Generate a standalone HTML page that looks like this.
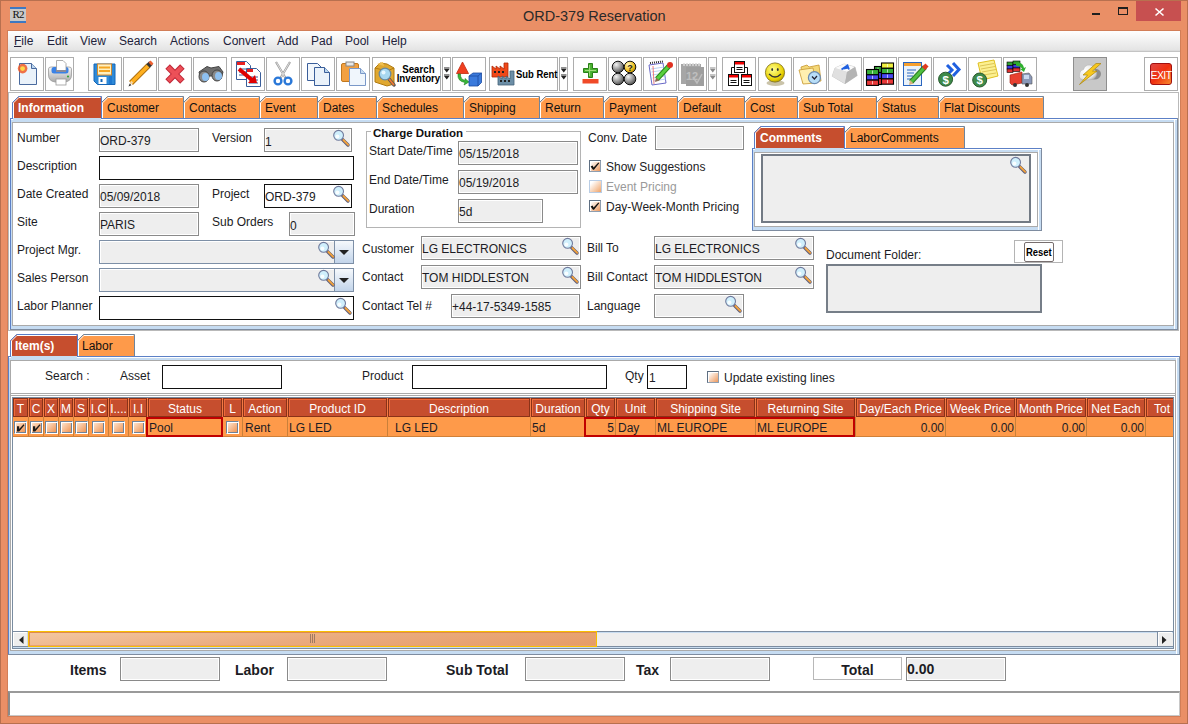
<!DOCTYPE html><html><head><meta charset='utf-8'><style>
*{margin:0;padding:0;box-sizing:border-box}
html,body{width:1188px;height:724px;overflow:hidden}
body{position:relative;background:#EA8F66;font-family:"Liberation Sans",sans-serif;font-size:12px;color:#1c1c24}
.a{position:absolute}
.t{white-space:nowrap}
.gf{background:#EEEEEE;border:1px solid #8A8A8A;box-shadow:inset 1px 1px 0 #fff}
.wf{background:#fff;border:1px solid #000}
.tb{background:#fff;border:1px solid #ADADAD}
svg{position:absolute;overflow:visible}
</style></head><body>
<div class="a" style="left:0px;top:0px;width:1188px;height:724px;border:1px solid #B8704F;"></div>
<div class="a" style="left:7px;top:30px;width:1174px;height:687px;border:1px solid #D27E58"></div>
<div class="a" style="left:8px;top:31px;width:1172px;height:685px;background:#fff"></div>
<div class="a" style="left:10px;top:7px;width:16px;height:16px;background:#C9C9C9;border-top:2px solid #3D78C2;border-bottom:2px solid #3D78C2"></div>
<div class="a t" style="left:10px;top:8px;width:16px;text-align:center;font:11px/12px 'Liberation Serif',serif;color:#111;letter-spacing:-1px">R2</div>
<div class="a t " style="left:523px;top:7px;line-height:18.5px;font-size:14.5px;color:#2a2a2a;">ORD-379 Reservation</div>
<div class="a" style="left:1136px;top:1px;width:45px;height:20px;background:#C75050"></div>
<svg style="left:1155px;top:8px" width="9" height="8"><path d="M0.5 0.5L8.5 7.5M8.5 0.5L0.5 7.5" stroke="#fff" stroke-width="1.6"/></svg>
<div class="a" style="left:1118px;top:7px;width:10px;height:8px;border:1px solid #1f1f1f;border-top-width:2px"></div>
<div class="a" style="left:1092px;top:13px;width:8px;height:2px;background:#1f1f1f"></div>
<div class="a" style="left:8px;top:31px;width:1172px;height:19px;background:linear-gradient(#fff,#E4E4E4)"></div>
<div class="a" style="left:8px;top:50px;width:1172px;height:1px;background:#DCDCDC"></div>
<div class="a" style="left:8px;top:51px;width:1172px;height:1px;background:#C4C4C4"></div>
<div class="a t " style="left:14px;top:33px;line-height:16px;font-size:12px;color:#22223a;"><u>F</u>ile</div>
<div class="a t " style="left:47px;top:33px;line-height:16px;font-size:12px;color:#22223a;">Edit</div>
<div class="a t " style="left:80px;top:33px;line-height:16px;font-size:12px;color:#22223a;">View</div>
<div class="a t " style="left:119px;top:33px;line-height:16px;font-size:12px;color:#22223a;">Search</div>
<div class="a t " style="left:170px;top:33px;line-height:16px;font-size:12px;color:#22223a;">Actions</div>
<div class="a t " style="left:223px;top:33px;line-height:16px;font-size:12px;color:#22223a;">Convert</div>
<div class="a t " style="left:277px;top:33px;line-height:16px;font-size:12px;color:#22223a;">Add</div>
<div class="a t " style="left:311px;top:33px;line-height:16px;font-size:12px;color:#22223a;">Pad</div>
<div class="a t " style="left:345px;top:33px;line-height:16px;font-size:12px;color:#22223a;">Pool</div>
<div class="a t " style="left:382px;top:33px;line-height:16px;font-size:12px;color:#22223a;">Help</div>
<div class="a" style="left:10px;top:57px;width:34px;height:34px;background:#fff;border:1px solid #ADADAD"></div>
<div class="a" style="left:45px;top:57px;width:29px;height:34px;background:#fff;border:1px solid #ADADAD"></div>
<div class="a" style="left:88px;top:57px;width:34px;height:34px;background:#fff;border:1px solid #ADADAD"></div>
<div class="a" style="left:123px;top:57px;width:34px;height:34px;background:#fff;border:1px solid #ADADAD"></div>
<div class="a" style="left:158px;top:57px;width:34px;height:34px;background:#fff;border:1px solid #ADADAD"></div>
<div class="a" style="left:193px;top:57px;width:34px;height:34px;background:#fff;border:1px solid #ADADAD"></div>
<div class="a" style="left:231px;top:57px;width:34px;height:34px;background:#fff;border:1px solid #ADADAD"></div>
<div class="a" style="left:266px;top:57px;width:34px;height:34px;background:#fff;border:1px solid #ADADAD"></div>
<div class="a" style="left:301px;top:57px;width:34px;height:34px;background:#fff;border:1px solid #ADADAD"></div>
<div class="a" style="left:336px;top:57px;width:34px;height:34px;background:#fff;border:1px solid #ADADAD"></div>
<div class="a" style="left:372px;top:57px;width:69px;height:34px;background:#fff;border:1px solid #ADADAD"></div>
<div class="a" style="left:442px;top:57px;width:9px;height:34px;background:#fff;border:1px solid #ADADAD"></div>
<div class="a" style="left:452px;top:57px;width:34px;height:34px;background:#fff;border:1px solid #ADADAD"></div>
<div class="a" style="left:489px;top:57px;width:69px;height:34px;background:#fff;border:1px solid #ADADAD"></div>
<div class="a" style="left:559px;top:57px;width:9px;height:34px;background:#fff;border:1px solid #ADADAD"></div>
<div class="a" style="left:573px;top:57px;width:34px;height:34px;background:#fff;border:1px solid #ADADAD"></div>
<div class="a" style="left:608px;top:57px;width:34px;height:34px;background:#fff;border:1px solid #ADADAD"></div>
<div class="a" style="left:643px;top:57px;width:34px;height:34px;background:#fff;border:1px solid #ADADAD"></div>
<div class="a" style="left:678px;top:57px;width:29px;height:34px;background:#fff;border:1px solid #ADADAD"></div>
<div class="a" style="left:708px;top:57px;width:9px;height:34px;background:#fff;border:1px solid #ADADAD"></div>
<div class="a" style="left:722px;top:57px;width:34px;height:34px;background:#fff;border:1px solid #ADADAD"></div>
<div class="a" style="left:758px;top:57px;width:34px;height:34px;background:#fff;border:1px solid #ADADAD"></div>
<div class="a" style="left:793px;top:57px;width:34px;height:34px;background:#fff;border:1px solid #ADADAD"></div>
<div class="a" style="left:828px;top:57px;width:34px;height:34px;background:#fff;border:1px solid #ADADAD"></div>
<div class="a" style="left:863px;top:57px;width:34px;height:34px;background:#fff;border:1px solid #ADADAD"></div>
<div class="a" style="left:898px;top:57px;width:34px;height:34px;background:#fff;border:1px solid #ADADAD"></div>
<div class="a" style="left:933px;top:57px;width:34px;height:34px;background:#fff;border:1px solid #ADADAD"></div>
<div class="a" style="left:968px;top:57px;width:34px;height:34px;background:#fff;border:1px solid #ADADAD"></div>
<div class="a" style="left:1003px;top:57px;width:34px;height:34px;background:#fff;border:1px solid #ADADAD"></div>
<div class="a" style="left:1144px;top:57px;width:34px;height:34px;background:#fff;border:1px solid #ADADAD"></div>
<div class="a" style="left:1073px;top:57px;width:34px;height:34px;background:#C8C8C8;border:1px solid #8E8E8E"></div>
<div class="a" style="left:8px;top:92px;width:1171px;height:239px;border:1px solid #B9B9B9"></div>
<svg style="left:10px;top:57px" width="34" height="34">
<path d="M9.5 6.5H21.5L26.5 11.5V27.5H9.5Z" fill="#EAF2FA" stroke="#4A6A9E" stroke-width="1"/>
<path d="M21.5 6.5V11.5H26.5" fill="#BCD6EE" stroke="#4A6A9E" stroke-width="1"/>
<circle cx="12.6" cy="11.6" r="4.8" fill="#F05A28" opacity=".85"/>
<circle cx="12.6" cy="11.6" r="2.4" fill="#FFD84A"/>
</svg>
<svg style="left:45px;top:57px" width="34" height="34">
<defs><linearGradient id="pr" x1="0" y1="0" x2="0" y2="1"><stop offset="0" stop-color="#FAFAFA"/><stop offset="1" stop-color="#A8A8A8"/></linearGradient></defs>
<path d="M3.5 12Q3.5 10 6 10H24Q26.5 10 26.5 12V18Q26.5 24 20 25H10Q3.5 24 3.5 18Z" fill="url(#pr)" stroke="#9A9A9A" stroke-width=".8"/>
<rect x="6.5" y="10" width="17" height="6.5" rx="2.5" fill="#3A82E6"/>
<path d="M11.5 3.5H18L21 6.5V13.5H11.5Z" fill="#fff" stroke="#999" stroke-width=".8"/>
<rect x="11" y="13" width="10" height="2" fill="#8A8A98"/>
<rect x="11" y="22" width="10" height="6" fill="#fff" stroke="#999" stroke-width=".8"/>
<circle cx="23" cy="19.5" r="1" fill="#2AA02A"/>
</svg>
<svg style="left:88px;top:57px" width="34" height="34">
<path d="M6 7H27V27.5H9.5L6 24Z" fill="#2E8AD8" stroke="#1466B8"/>
<rect x="9.5" y="7" width="14" height="11" fill="#FFF0C0" stroke="#D08A30"/>
<rect x="11" y="9.5" width="11" height="2" fill="#F5A623"/>
<rect x="11" y="13" width="11" height="2" fill="#F5A623"/>
<rect x="10.5" y="20" width="8" height="7" fill="#fff"/>
<rect x="12.5" y="22" width="2" height="3" fill="#1466B8"/>
<rect x="21" y="19" width="3" height="8" fill="#1E78D0"/>
</svg>
<svg style="left:123px;top:57px" width="34" height="34">
<path d="M8 26L25.5 8.5" stroke="#B07010" stroke-width="5.5" stroke-linecap="butt"/>
<path d="M8 26L25.5 8.5" stroke="#FFB020" stroke-width="3.6"/>
<path d="M25 9L28 6" stroke="#333" stroke-width="5"/>
<path d="M27 7L29 5" stroke="#F06030" stroke-width="4"/>
<path d="M6 29L8.2 23.8L10.2 25.8Z" fill="#F4D8B0"/>
<path d="M5.5 29.5L6.8 26.6L8.4 28.2Z" fill="#333"/>
</svg>
<svg style="left:158px;top:57px" width="34" height="34">
<path d="M9.6 9.6L24.4 24.4M24.4 9.6L9.6 24.4" stroke="#C02838" stroke-width="6.4"/>
<path d="M10.2 10.2L23.8 23.8M23.8 10.2L10.2 23.8" stroke="#EC5058" stroke-width="4.4"/>
</svg>
<svg style="left:193px;top:57px" width="34" height="34">
<path d="M6 15L14 9.5L18 11L26 9.5L30 15L28 22L20 19L14 19L8 23Z" fill="#6E6E6E" stroke="#444"/>
<ellipse cx="11" cy="19.5" rx="5" ry="5.5" fill="#8A8A8A" stroke="#444"/>
<ellipse cx="24" cy="18.5" rx="5" ry="5.5" fill="#8A8A8A" stroke="#444"/>
<ellipse cx="12.5" cy="20" rx="3.5" ry="4" fill="#8EC0F0"/>
<ellipse cx="25.5" cy="19" rx="3.5" ry="4" fill="#8EC0F0"/>
</svg>
<svg style="left:231px;top:57px" width="34" height="34">
<path d="M5.5 4.5H15.5L19.5 8.5V22.5H5.5Z" fill="#fff" stroke="#3A5E9A"/>
<rect x="6" y="5" width="8" height="3" fill="#E82020"/>
<path d="M8 12H16M8 15H16M8 18H16" stroke="#3A5E9A" stroke-width="1"/>
<path d="M15.5 11.5H25.5L29.5 15.5V29.5H15.5Z" fill="#fff" stroke="#3A5E9A"/>
<rect x="16" y="12" width="6" height="3" fill="#E82020"/>
<path d="M18 20H27M18 23H27M18 26H27" stroke="#3A5E9A" stroke-width="1"/>
<path d="M8 12L21 23" stroke="#E00000" stroke-width="4"/>
<path d="M17 26L26 26L24 18Z" fill="#E00000"/>
</svg>
<svg style="left:266px;top:57px" width="34" height="34">
<path d="M10 5L19.5 21M24 5L14.5 21" stroke="#9A9A9A" stroke-width="2.2"/>
<path d="M10.5 5.5L19 20.5M23.5 5.5L15 20.5" stroke="#E8E8E8" stroke-width="0.9"/>
<circle cx="12" cy="24" r="3.4" fill="none" stroke="#2A78D8" stroke-width="2.4"/>
<circle cx="22" cy="24" r="3.4" fill="none" stroke="#2A78D8" stroke-width="2.4"/>
</svg>
<svg style="left:301px;top:57px" width="34" height="34">
<path d="M6.5 6.5H16.5L20.5 10.5V23.5H6.5Z" fill="#F2F7FC" stroke="#3A5E9A"/>
<path d="M13.5 10.5H23.5L28.5 15.5V28.5H13.5Z" fill="#EAF2FA" stroke="#3A5E9A"/>
<path d="M23.5 10.5V15.5H28.5" fill="#BCD6EE" stroke="#3A5E9A"/>
</svg>
<svg style="left:336px;top:57px" width="34" height="34">
<rect x="5.5" y="6.5" width="17" height="18" rx="1.5" fill="#F2A040" stroke="#C07820"/>
<rect x="10" y="5" width="8" height="4" fill="#E8E8E8" stroke="#888"/>
<path d="M13.5 11.5H24.5L29.5 16.5V28.5H13.5Z" fill="#F0F6FC" stroke="#7A98C8"/>
<path d="M24.5 11.5V16.5H29.5" fill="#C8DCF0" stroke="#7A98C8"/>
</svg>
<svg style="left:372px;top:57px" width="69" height="34">
<path d="M3 11L8 6L15 7L22 11V27L15 29L3 25Z" fill="#E0A830" stroke="#B07A10"/>
<path d="M3 11L15 14L22 11" fill="none" stroke="#B07A10"/>
<path d="M5 7L11 5L12 9Z" fill="#F0C050"/>
<path d="M17 22L22 28" stroke="#555" stroke-width="3.5" stroke-linecap="round"/>
<path d="M17.5 22.5L21.5 27.5" stroke="#F07830" stroke-width="2" stroke-linecap="round"/>
<circle cx="13" cy="17" r="5.8" fill="#A8D8F0" stroke="#6A8AA0" stroke-width="1.3"/>
<circle cx="11.5" cy="15.5" r="2" fill="#E8F8FF"/>
</svg>
<div class="a t" style="left:396px;top:65px;width:45px;text-align:center;font:bold 11px/8.5px 'Liberation Sans',sans-serif;color:#000;transform:scaleX(0.88);transform-origin:0 0;width:51px">Search<br>Inventory</div>
<svg style="left:442px;top:57px" width="9" height="34">
<path d="M2 11H7.5M2 18H7.5" stroke="#222" stroke-width="1"/>
<path d="M2 12H7.5L4.75 15.5Z M2 19H7.5L4.75 22.5Z" fill="#222"/>
</svg>
<svg style="left:452px;top:57px" width="34" height="34">
<path d="M10.5 5L16.5 16.5H4.5Z" fill="#F04020" stroke="#C02810" stroke-width="0.8"/>
<path d="M6 17Q5 24 13 25.5L12 28L17 25L13 21.5L13 23.5Q8 22 8.5 17Z" fill="#3AB83A" stroke="#208020" stroke-width="0.6"/>
<path d="M17 19L21 16H29.5V25.5L26 29H17Z" fill="#3A7ADC" stroke="#1A4AA0" stroke-width="0.8"/>
<path d="M17 19H26V29M26 19L29.5 16" fill="none" stroke="#1A4AA0" stroke-width="0.8"/>
</svg>
<svg style="left:489px;top:57px" width="69" height="34">
<path d="M3 20V9L7 12V9L11 12V9L15 12V6H19V20Z" fill="#F04818" stroke="#B02808" stroke-width="0.8"/>
<rect x="5" y="14" width="2" height="2" fill="#222"/><rect x="9" y="14" width="2" height="2" fill="#222"/><rect x="13" y="14" width="2" height="2" fill="#222"/>
<path d="M9 28V19L13 22V19L17 22V19L21 22V14H25V28Z" fill="#6C8EA6" stroke="#44627A" stroke-width="0.8"/>
<rect x="11" y="23" width="2" height="2" fill="#222"/><rect x="15" y="23" width="2" height="2" fill="#222"/><rect x="19" y="23" width="2" height="2" fill="#222"/>
</svg>
<div class="a t" style="left:516px;top:67px;font:bold 11px/14px 'Liberation Sans',sans-serif;color:#000;transform:scaleX(0.86);transform-origin:0 0">Sub Rent</div>
<svg style="left:559px;top:57px" width="9" height="34">
<path d="M2 11H7.5M2 18H7.5" stroke="#222" stroke-width="1"/>
<path d="M2 12H7.5L4.75 15.5Z M2 19H7.5L4.75 22.5Z" fill="#222"/>
</svg>
<svg style="left:573px;top:57px" width="34" height="34">
<path d="M15.5 6.5H19.5V11.5H24.5V15.5H19.5V20.5H15.5V15.5H10.5V11.5H15.5Z" fill="#48B030" stroke="#2A8018" stroke-width="1"/>
<path d="M16.6 8V19M12 13.5H23" stroke="#C8F0A0" stroke-width="1" opacity=".7"/>
<rect x="9.5" y="22" width="16" height="4.5" fill="#F04A28"/>
</svg>
<svg style="left:608px;top:57px" width="34" height="34">
<defs><radialGradient id="gb" cx=".35" cy=".3" r=".8"><stop offset="0" stop-color="#F4F4F4"/><stop offset=".6" stop-color="#8A8A8A"/><stop offset="1" stop-color="#3A3A3A"/></radialGradient>
<radialGradient id="gy" cx=".35" cy=".3" r=".8"><stop offset="0" stop-color="#FFF8C0"/><stop offset=".6" stop-color="#F0C020"/><stop offset="1" stop-color="#A07800"/></radialGradient></defs>
<circle cx="10" cy="10" r="5.8" fill="url(#gb)" stroke="#111" stroke-width="1"/>
<circle cx="22" cy="10" r="5.8" fill="url(#gy)" stroke="#111" stroke-width="1"/>
<circle cx="10" cy="22" r="5.8" fill="url(#gb)" stroke="#111" stroke-width="1"/>
<circle cx="22" cy="22" r="5.8" fill="url(#gb)" stroke="#111" stroke-width="1"/>
<text x="22" y="13.5" font-family="Liberation Sans" font-weight="bold" font-size="9" text-anchor="middle" fill="#222">?</text>
</svg>
<svg style="left:643px;top:57px" width="34" height="34">
<path d="M6 8L20 6L23 26L9 28Z" fill="#fff" stroke="#6A6AC8" stroke-width="1"/>
<path d="M8 12L21 10M8.5 15L21.5 13M9 18L22 16M9.5 21L22.5 19M10 24L23 22" stroke="#A8C8F0" stroke-width="0.8"/>
<path d="M10 9L11 27" stroke="#F06060" stroke-width="0.8"/>
<path d="M7 6L20 4.5" stroke="#333" stroke-width="2" stroke-dasharray="1 1"/>
<path d="M14 22L26 9" stroke="#2A8A18" stroke-width="5"/>
<path d="M14 22L26 9" stroke="#58D040" stroke-width="3"/>
<circle cx="27" cy="8" r="3" fill="#E03020"/>
<path d="M12 25L13 20.5L16.5 23.5Z" fill="#8A6A50"/>
</svg>
<svg style="left:678px;top:57px" width="29" height="34">
<rect x="3" y="7" width="20" height="20" fill="#A6A6A6"/>
<rect x="8" y="10" width="18" height="19" fill="#9E9E9E"/>
<path d="M6 6V9M9 6V9M12 6V9M15 6V9M18 6V9M21 6V9" stroke="#DADADA" stroke-width="1.5"/>
<text x="14" y="23" font-family="Liberation Sans" font-weight="bold" font-size="11" text-anchor="middle" fill="#BEBEBE">12</text>
<path d="M15 20L19 26L24 17" fill="none" stroke="#BEBEBE" stroke-width="1.5"/>
</svg>
<svg style="left:708px;top:57px" width="9" height="34">
<path d="M2 11H7.5M2 18H7.5" stroke="#8A8A8A" stroke-width="1"/>
<path d="M2 12H7.5L4.75 15.5Z M2 19H7.5L4.75 22.5Z" fill="#8A8A8A"/>
</svg>
<svg style="left:722px;top:57px" width="34" height="34">
<path d="M9.5 17V10.5H25.5V17" fill="none" stroke="#111" stroke-width="1"/>
<rect x="12.5" y="4.5" width="10" height="11" fill="#fff" stroke="#111"/>
<rect x="13" y="5" width="9" height="2.5" fill="#F00000"/>
<path d="M14.5 10.5H20.5M14.5 12.5H20.5" stroke="#111"/>
<rect x="6.5" y="17.5" width="10" height="11" fill="#fff" stroke="#111"/>
<rect x="7" y="18" width="9" height="2.5" fill="#F00000"/>
<path d="M8.5 23.5H14.5M8.5 25.5H14.5" stroke="#111"/>
<rect x="19.5" y="17.5" width="10" height="11" fill="#fff" stroke="#111"/>
<rect x="20" y="18" width="9" height="2.5" fill="#F00000"/>
<path d="M21.5 23.5H27.5M21.5 25.5H27.5" stroke="#111"/>
</svg>
<svg style="left:758px;top:57px" width="34" height="34">
<defs><radialGradient id="sm" cx=".4" cy=".35" r=".75"><stop offset="0" stop-color="#FFFF90"/><stop offset=".7" stop-color="#E8D000"/><stop offset="1" stop-color="#A08800"/></radialGradient></defs>
<ellipse cx="17.5" cy="26" rx="9" ry="3" fill="#8A7A40" opacity=".45"/>
<circle cx="17" cy="15.5" r="9.6" fill="url(#sm)" stroke="#7A6A10" stroke-width=".8"/>
<ellipse cx="14.2" cy="12.5" rx=".9" ry="1.6" fill="#333"/>
<ellipse cx="19.8" cy="12.5" rx=".9" ry="1.6" fill="#333"/>
<path d="M11 17Q17 23 23 17" fill="none" stroke="#333" stroke-width="1.3"/>
</svg>
<svg style="left:793px;top:57px" width="34" height="34">
<path d="M8 10L14 8L16 10L26 8L28 24L10 26Z" fill="#F4D878" stroke="#C89830" stroke-width="0.8"/>
<path d="M6 13L20 11L23 26L10 27Z" fill="#FFF0B0" stroke="#C89830" stroke-width="0.8"/>
<circle cx="21.4" cy="20.7" r="6" fill="#B8DEF8" stroke="#6A8AB0" stroke-width="1.2"/>
<path d="M19 19.5L21.4 22L24 19" fill="none" stroke="#223" stroke-width="1.2"/>
</svg>
<svg style="left:828px;top:57px" width="34" height="34">
<defs><linearGradient id="kc" x1="0" y1="0" x2="1" y2="1"><stop offset="0" stop-color="#F4F4F4"/><stop offset="1" stop-color="#9C9C9C"/></linearGradient></defs>
<path d="M7 11L16 7L27 10L29.2 18.6L17 26.7L4.2 19.2Z" fill="url(#kc)" stroke="#B8B8B8" stroke-width=".6"/>
<path d="M7 11L16 7L27 10L19 15Z" fill="#FAFAFA"/>
<path d="M4.2 19.2L7 11L19 15L17 26.7Z" fill="#E0E0E0"/>
<path d="M19 15L27 10L29.2 18.6L17 26.7Z" fill="#B4B4B4"/>
<path d="M13.5 12.5L19.5 8.5L21 12.5M15.5 11.5L20.5 10.5" fill="none" stroke="#2060E0" stroke-width="1.8"/>
</svg>
<svg style="left:863px;top:57px" width="34" height="34">
<rect x="11.5" y="9.5" width="7" height="6" fill="#30A030" stroke="#000" stroke-width="1.1"/><path d="M15.0 10.5V14.5" stroke="#fff" stroke-width=".9" opacity=".7"/><rect x="11.5" y="15.5" width="7" height="6" fill="#3838E0" stroke="#000" stroke-width="1.1"/><path d="M15.0 16.5V20.5" stroke="#fff" stroke-width=".9" opacity=".7"/><rect x="11.5" y="21.5" width="7" height="6" fill="#E03030" stroke="#000" stroke-width="1.1"/><path d="M15.0 22.5V26.5" stroke="#fff" stroke-width=".9" opacity=".7"/>
<rect x="3.5" y="12.5" width="12" height="5.3" fill="#38B038" stroke="#000" stroke-width="1.1"/><path d="M9.5 13.5V16.8" stroke="#fff" stroke-width=".9" opacity=".7"/><rect x="3.5" y="17.8" width="12" height="5.3" fill="#4848F0" stroke="#000" stroke-width="1.1"/><path d="M9.5 18.8V22.1" stroke="#fff" stroke-width=".9" opacity=".7"/><rect x="3.5" y="23.1" width="12" height="5.3" fill="#E83838" stroke="#000" stroke-width="1.1"/><path d="M9.5 24.1V27.4" stroke="#fff" stroke-width=".9" opacity=".7"/>
<rect x="18.5" y="6.0" width="12" height="5.3" fill="#F0F040" stroke="#000" stroke-width="1.1"/><path d="M24.5 7.0V10.3" stroke="#fff" stroke-width=".9" opacity=".7"/><rect x="18.5" y="11.3" width="12" height="5.3" fill="#38B038" stroke="#000" stroke-width="1.1"/><path d="M24.5 12.3V15.600000000000001" stroke="#fff" stroke-width=".9" opacity=".7"/><rect x="18.5" y="16.6" width="12" height="5.3" fill="#4848F0" stroke="#000" stroke-width="1.1"/><path d="M24.5 17.6V20.9" stroke="#fff" stroke-width=".9" opacity=".7"/><rect x="18.5" y="21.9" width="12" height="5.3" fill="#E83838" stroke="#000" stroke-width="1.1"/><path d="M24.5 22.9V26.2" stroke="#fff" stroke-width=".9" opacity=".7"/>
</svg>
<svg style="left:898px;top:57px" width="34" height="34">
<rect x="5.5" y="5.5" width="18" height="23" fill="#EAF2FA" stroke="#2A66C0"/>
<rect x="6" y="6" width="17" height="3" fill="#F5A030"/>
<path d="M9 13H18M9 16H16M9 19H15M9 22H14" stroke="#2A66C0" stroke-width="1"/>
<path d="M13 25L27 10" stroke="#2A7A20" stroke-width="5.2"/>
<path d="M13 25L27 10" stroke="#50C040" stroke-width="3.2"/>
<path d="M25.5 11.5L29 8" stroke="#E03A20" stroke-width="4.5"/>
<path d="M11 28L12 23L15.5 26.5Z" fill="#D8B080"/>
</svg>
<svg style="left:933px;top:57px" width="34" height="34">
<path d="M14 8L19 13L14 18M20 6L26 12.5L20 19" fill="none" stroke="#2060E0" stroke-width="3"/>
<circle cx="12.6" cy="22.2" r="7" fill="#3E8A4A" stroke="#2A5A30"/>
<text x="12.6" y="26.5" font-family="Liberation Sans" font-weight="bold" font-size="11.5" text-anchor="middle" fill="#fff">$</text>
</svg>
<svg style="left:968px;top:57px" width="34" height="34">
<path d="M10 6L26 3L30 19L14 23Z" fill="#FCF090" stroke="#E0C020"/>
<path d="M12 9L26 6.5M13 12L27 9.5M14 15L28 12.5M15 18L28 16" stroke="#D8C050" stroke-width="0.9"/>
<circle cx="11.7" cy="23" r="7" fill="#3E8A4A" stroke="#2A5A30"/>
<text x="11.7" y="27.3" font-family="Liberation Sans" font-weight="bold" font-size="11.5" text-anchor="middle" fill="#fff">$</text>
</svg>
<svg style="left:1003px;top:57px" width="34" height="34">
<rect x="4" y="5" width="6" height="3.5" fill="#30A030" stroke="#000" stroke-width=".6"/>
<rect x="4" y="8.5" width="6" height="3.5" fill="#3838E0" stroke="#000" stroke-width=".6"/>
<rect x="4" y="12" width="6" height="3.5" fill="#E03030" stroke="#000" stroke-width=".6"/>
<rect x="10" y="4" width="7" height="3.5" fill="#30A030" stroke="#000" stroke-width=".6"/>
<rect x="10" y="7.5" width="7" height="3.5" fill="#3838E0" stroke="#000" stroke-width=".6"/>
<rect x="10" y="11" width="7" height="3.5" fill="#E03030" stroke="#000" stroke-width=".6"/>
<path d="M13 6Q20 5 21 11L23 10L21 15L17 12L19 12Q18 9 13 9Z" fill="#30B030"/>
<path d="M7 18L19 15L19 26L9 28L7 26Z" fill="#E84030" stroke="#A02010" stroke-width=".6"/>
<path d="M19 17L26 16L29 20V27L19 27Z" fill="#8A98B8" stroke="#555" stroke-width=".6"/>
<rect x="21" y="18" width="5" height="4" fill="#C8D8F0"/>
<circle cx="12" cy="28" r="2" fill="#333"/><circle cx="24" cy="28" r="2" fill="#333"/>
</svg>
<svg style="left:1073px;top:57px" width="34" height="34">
<defs><radialGradient id="cl" cx=".35" cy=".35" r=".8"><stop offset="0" stop-color="#FFFFFF"/><stop offset=".7" stop-color="#E6E6E6"/><stop offset="1" stop-color="#A0A0A0"/></radialGradient></defs>
<ellipse cx="21.5" cy="17" rx="6.5" ry="5.5" fill="#8C8C8C"/>
<path d="M10 23Q5.5 22.5 6.5 17Q7 13 10.5 12.5Q12 7.5 17 8Q21.5 8.5 21.5 13Q25 15 23 19.5Q21 23 16 23Z" fill="url(#cl)" stroke="#B0B0B0" stroke-width=".5"/>
<path d="M23 6.5H28L19.5 14H24L6.5 27.5L14.5 18H10Z" fill="#F8C81E" stroke="#A88410" stroke-width=".7" stroke-linejoin="round"/>
</svg>
<svg style="left:1144px;top:57px" width="34" height="34">
<defs><linearGradient id="ex" x1="0" y1="0" x2="1" y2="1"><stop offset="0" stop-color="#E04848"/><stop offset=".5" stop-color="#F03010"/><stop offset="1" stop-color="#F89030"/></linearGradient></defs>
<rect x="6.5" y="6.5" width="21" height="21" rx="2.5" fill="url(#ex)" stroke="#A01010"/>
<text x="17" y="21.5" font-family="Liberation Sans" font-size="10.5" text-anchor="middle" fill="#fff" letter-spacing="-0.6">EXIT</text>
</svg>
<svg style="left:0px;top:96px" width="1188" height="23"><path d="M101.5 23V6.5L107.5 0.5H183.5V23" fill="#FE9A4A" stroke="#6E849C" stroke-width="1"/><path d="M102.5 23V6.9L107.9 1.5H182.5" fill="none" stroke="#fff" stroke-width="1"/><path d="M183.5 23V6.5L189.5 0.5H259.5V23" fill="#FE9A4A" stroke="#6E849C" stroke-width="1"/><path d="M184.5 23V6.9L189.9 1.5H258.5" fill="none" stroke="#fff" stroke-width="1"/><path d="M259.5 23V6.5L265.5 0.5H317.5V23" fill="#FE9A4A" stroke="#6E849C" stroke-width="1"/><path d="M260.5 23V6.9L265.9 1.5H316.5" fill="none" stroke="#fff" stroke-width="1"/><path d="M317.5 23V6.5L323.5 0.5H376.5V23" fill="#FE9A4A" stroke="#6E849C" stroke-width="1"/><path d="M318.5 23V6.9L323.9 1.5H375.5" fill="none" stroke="#fff" stroke-width="1"/><path d="M376.5 23V6.5L382.5 0.5H463.5V23" fill="#FE9A4A" stroke="#6E849C" stroke-width="1"/><path d="M377.5 23V6.9L382.9 1.5H462.5" fill="none" stroke="#fff" stroke-width="1"/><path d="M463.5 23V6.5L469.5 0.5H539.5V23" fill="#FE9A4A" stroke="#6E849C" stroke-width="1"/><path d="M464.5 23V6.9L469.9 1.5H538.5" fill="none" stroke="#fff" stroke-width="1"/><path d="M539.5 23V6.5L545.5 0.5H603.5V23" fill="#FE9A4A" stroke="#6E849C" stroke-width="1"/><path d="M540.5 23V6.9L545.9 1.5H602.5" fill="none" stroke="#fff" stroke-width="1"/><path d="M603.5 23V6.5L609.5 0.5H677.5V23" fill="#FE9A4A" stroke="#6E849C" stroke-width="1"/><path d="M604.5 23V6.9L609.9 1.5H676.5" fill="none" stroke="#fff" stroke-width="1"/><path d="M677.5 23V6.5L683.5 0.5H744.5V23" fill="#FE9A4A" stroke="#6E849C" stroke-width="1"/><path d="M678.5 23V6.9L683.9 1.5H743.5" fill="none" stroke="#fff" stroke-width="1"/><path d="M744.5 23V6.5L750.5 0.5H797.5V23" fill="#FE9A4A" stroke="#6E849C" stroke-width="1"/><path d="M745.5 23V6.9L750.9 1.5H796.5" fill="none" stroke="#fff" stroke-width="1"/><path d="M797.5 23V6.5L803.5 0.5H876.5V23" fill="#FE9A4A" stroke="#6E849C" stroke-width="1"/><path d="M798.5 23V6.9L803.9 1.5H875.5" fill="none" stroke="#fff" stroke-width="1"/><path d="M876.5 23V6.5L882.5 0.5H938.5V23" fill="#FE9A4A" stroke="#6E849C" stroke-width="1"/><path d="M877.5 23V6.9L882.9 1.5H937.5" fill="none" stroke="#fff" stroke-width="1"/><path d="M938.5 23V6.5L944.5 0.5H1043.5V23" fill="#FE9A4A" stroke="#6E849C" stroke-width="1"/><path d="M939.5 23V6.9L944.9 1.5H1042.5" fill="none" stroke="#fff" stroke-width="1"/><path d="M12.5 23V6.5L18.5 0.5H101.5V23" fill="#C64E2E" stroke="#5A7EC6" stroke-width="1"/><path d="M13.5 23V6.9L18.9 1.5H100.5" fill="none" stroke="#fff" stroke-width="1"/></svg>
<div class="a t " style="left:18px;top:100px;line-height:16px;font-size:12px;font-weight:bold;color:#fff;">Information</div>
<div class="a t " style="left:107px;top:100px;line-height:16px;font-size:12px;color:#111;">Customer</div>
<div class="a t " style="left:189px;top:100px;line-height:16px;font-size:12px;color:#111;">Contacts</div>
<div class="a t " style="left:265px;top:100px;line-height:16px;font-size:12px;color:#111;">Event</div>
<div class="a t " style="left:323px;top:100px;line-height:16px;font-size:12px;color:#111;">Dates</div>
<div class="a t " style="left:382px;top:100px;line-height:16px;font-size:12px;color:#111;">Schedules</div>
<div class="a t " style="left:469px;top:100px;line-height:16px;font-size:12px;color:#111;">Shipping</div>
<div class="a t " style="left:545px;top:100px;line-height:16px;font-size:12px;color:#111;">Return</div>
<div class="a t " style="left:609px;top:100px;line-height:16px;font-size:12px;color:#111;">Payment</div>
<div class="a t " style="left:683px;top:100px;line-height:16px;font-size:12px;color:#111;">Default</div>
<div class="a t " style="left:750px;top:100px;line-height:16px;font-size:12px;color:#111;">Cost</div>
<div class="a t " style="left:803px;top:100px;line-height:16px;font-size:12px;color:#111;">Sub Total</div>
<div class="a t " style="left:882px;top:100px;line-height:16px;font-size:12px;color:#111;">Status</div>
<div class="a t " style="left:944px;top:100px;line-height:16px;font-size:12px;color:#111;">Flat Discounts</div>
<div class="a" style="left:10px;top:118px;width:1168px;height:212px;background:#C6DCF2"></div>
<div class="a" style="left:10px;top:118px;width:1168px;height:1px;background:#5C80C6"></div>
<div class="a" style="left:10px;top:118px;width:1px;height:212px;background:#5C80C6"></div>
<div class="a" style="left:1177px;top:118px;width:1px;height:212px;background:#7E8CA0"></div>
<div class="a" style="left:10px;top:329px;width:1168px;height:1px;background:#7E8CA0"></div>
<div class="a" style="left:11px;top:119px;width:1166px;height:1px;background:#fff"></div>
<div class="a" style="left:1174px;top:119px;width:1px;height:210px;background:#fff"></div>
<div class="a" style="left:13px;top:118px;width:88px;height:2px;background:#C6DCF2"></div>
<div class="a" style="left:12px;top:122px;width:1162px;height:204px;background:#fff;border:1px solid #AAAAAA"></div>
<div class="a t " style="left:17px;top:130px;line-height:16px;font-size:12px;color:#1c1c24;">Number</div>
<div class="a" style="left:99px;top:128px;width:100px;height:24px;background:#EEEEEE;border:1px solid #8A8A8A;box-shadow:inset 1px 1px 0 #fff,inset -1px -1px 0 #fff;"></div>
<div class="a t " style="left:100px;top:133px;line-height:16px;font-size:12px;color:#1c1c24;">ORD-379</div>
<div class="a t " style="left:212px;top:130px;line-height:16px;font-size:12px;color:#1c1c24;">Version</div>
<div class="a" style="left:264px;top:128px;width:88px;height:24px;background:#EEEEEE;border:1px solid #8A8A8A;box-shadow:inset 1px 1px 0 #fff,inset -1px -1px 0 #fff;"></div>
<div class="a t " style="left:265px;top:134px;line-height:16px;font-size:12px;color:#1c1c24;">1</div>
<svg style="left:332px;top:129px" width="18" height="18"><path d="M10.6 10.6L16 16" stroke="#5C5C78" stroke-width="3.4" stroke-linecap="round"/><path d="M11.4 11L16.2 15.8" stroke="#F2A23C" stroke-width="1.9" stroke-linecap="round"/><circle cx="6.6" cy="6.3" r="4.9" fill="#CFEFFC" stroke="#707A9C" stroke-width="1.1"/><circle cx="5.4" cy="7.6" r="2" fill="#fff" opacity=".85"/></svg>
<div class="a t " style="left:17px;top:158px;line-height:16px;font-size:12px;color:#1c1c24;">Description</div>
<div class="a" style="left:99px;top:156px;width:255px;height:24px;background:#fff;border:1px solid #111;"></div>
<div class="a t " style="left:17px;top:186px;line-height:16px;font-size:12px;color:#1c1c24;">Date Created</div>
<div class="a" style="left:99px;top:184px;width:100px;height:24px;background:#EEEEEE;border:1px solid #8A8A8A;box-shadow:inset 1px 1px 0 #fff,inset -1px -1px 0 #fff;"></div>
<div class="a t " style="left:100px;top:189px;line-height:16px;font-size:12px;color:#1c1c24;">05/09/2018</div>
<div class="a t " style="left:212px;top:186px;line-height:16px;font-size:12px;color:#1c1c24;">Project</div>
<div class="a" style="left:264px;top:184px;width:88px;height:24px;background:#fff;border:1px solid #111;"></div>
<div class="a t " style="left:265px;top:189px;line-height:16px;font-size:12px;color:#1c1c24;">ORD-379</div>
<svg style="left:332px;top:185px" width="18" height="18"><path d="M10.6 10.6L16 16" stroke="#5C5C78" stroke-width="3.4" stroke-linecap="round"/><path d="M11.4 11L16.2 15.8" stroke="#F2A23C" stroke-width="1.9" stroke-linecap="round"/><circle cx="6.6" cy="6.3" r="4.9" fill="#CFEFFC" stroke="#707A9C" stroke-width="1.1"/><circle cx="5.4" cy="7.6" r="2" fill="#fff" opacity=".85"/></svg>
<div class="a t " style="left:17px;top:214px;line-height:16px;font-size:12px;color:#1c1c24;">Site</div>
<div class="a" style="left:99px;top:212px;width:100px;height:24px;background:#EEEEEE;border:1px solid #8A8A8A;box-shadow:inset 1px 1px 0 #fff,inset -1px -1px 0 #fff;"></div>
<div class="a t " style="left:100px;top:217px;line-height:16px;font-size:12px;color:#1c1c24;">PARIS</div>
<div class="a t " style="left:212px;top:214px;line-height:16px;font-size:12px;color:#1c1c24;">Sub Orders</div>
<div class="a" style="left:289px;top:212px;width:66px;height:24px;background:#EEEEEE;border:1px solid #8A8A8A;box-shadow:inset 1px 1px 0 #fff,inset -1px -1px 0 #fff;"></div>
<div class="a t " style="left:290px;top:218px;line-height:16px;font-size:12px;color:#1c1c24;">0</div>
<div class="a t " style="left:17px;top:242px;line-height:16px;font-size:12px;color:#1c1c24;">Project Mgr.</div>
<div class="a" style="left:99px;top:240px;width:255px;height:24px;background:#EEEEEE;border:1px solid #7D8FA6;box-shadow:inset 1px 1px 0 #fff"></div>
<div class="a" style="left:334px;top:240px;width:20px;height:24px;background:linear-gradient(#F6F9FC,#C2D4EA);border:1px solid #7D8FA6"></div>
<svg style="left:339px;top:250px" width="10" height="5"><path d="M0 0H10L5 5Z" fill="#222"/></svg>
<svg style="left:317px;top:241px" width="18" height="18"><path d="M10.6 10.6L16 16" stroke="#5C5C78" stroke-width="3.4" stroke-linecap="round"/><path d="M11.4 11L16.2 15.8" stroke="#F2A23C" stroke-width="1.9" stroke-linecap="round"/><circle cx="6.6" cy="6.3" r="4.9" fill="#CFEFFC" stroke="#707A9C" stroke-width="1.1"/><circle cx="5.4" cy="7.6" r="2" fill="#fff" opacity=".85"/></svg>
<div class="a t " style="left:17px;top:270px;line-height:16px;font-size:12px;color:#1c1c24;">Sales Person</div>
<div class="a" style="left:99px;top:268px;width:255px;height:24px;background:#EEEEEE;border:1px solid #7D8FA6;box-shadow:inset 1px 1px 0 #fff"></div>
<div class="a" style="left:334px;top:268px;width:20px;height:24px;background:linear-gradient(#F6F9FC,#C2D4EA);border:1px solid #7D8FA6"></div>
<svg style="left:339px;top:278px" width="10" height="5"><path d="M0 0H10L5 5Z" fill="#222"/></svg>
<svg style="left:317px;top:269px" width="18" height="18"><path d="M10.6 10.6L16 16" stroke="#5C5C78" stroke-width="3.4" stroke-linecap="round"/><path d="M11.4 11L16.2 15.8" stroke="#F2A23C" stroke-width="1.9" stroke-linecap="round"/><circle cx="6.6" cy="6.3" r="4.9" fill="#CFEFFC" stroke="#707A9C" stroke-width="1.1"/><circle cx="5.4" cy="7.6" r="2" fill="#fff" opacity=".85"/></svg>
<div class="a t " style="left:17px;top:298px;line-height:16px;font-size:12px;color:#1c1c24;">Labor Planner</div>
<div class="a" style="left:99px;top:296px;width:255px;height:24px;background:#fff;border:1px solid #111;"></div>
<svg style="left:334px;top:297px" width="18" height="18"><path d="M10.6 10.6L16 16" stroke="#5C5C78" stroke-width="3.4" stroke-linecap="round"/><path d="M11.4 11L16.2 15.8" stroke="#F2A23C" stroke-width="1.9" stroke-linecap="round"/><circle cx="6.6" cy="6.3" r="4.9" fill="#CFEFFC" stroke="#707A9C" stroke-width="1.1"/><circle cx="5.4" cy="7.6" r="2" fill="#fff" opacity=".85"/></svg>
<div class="a" style="left:366px;top:131px;width:215px;height:97px;border:1px solid #B4B4B4"></div>
<div class="a" style="left:371px;top:125px;width:95px;height:12px;background:#fff"></div>
<div class="a t " style="left:373px;top:126px;line-height:15.5px;font-size:11.5px;font-weight:bold;color:#111;">Charge Duration</div>
<div class="a t " style="left:369px;top:143px;line-height:16px;font-size:12px;color:#1c1c24;">Start Date/Time</div>
<div class="a" style="left:458px;top:141px;width:120px;height:24px;background:#EEEEEE;border:1px solid #8A8A8A;box-shadow:inset 1px 1px 0 #fff,inset -1px -1px 0 #fff;"></div>
<div class="a t " style="left:459px;top:146px;line-height:16px;font-size:12px;color:#1c1c24;">05/15/2018</div>
<div class="a t " style="left:369px;top:172px;line-height:16px;font-size:12px;color:#1c1c24;">End Date/Time</div>
<div class="a" style="left:458px;top:170px;width:120px;height:24px;background:#EEEEEE;border:1px solid #8A8A8A;box-shadow:inset 1px 1px 0 #fff,inset -1px -1px 0 #fff;"></div>
<div class="a t " style="left:459px;top:175px;line-height:16px;font-size:12px;color:#1c1c24;">05/19/2018</div>
<div class="a t " style="left:369px;top:201px;line-height:16px;font-size:12px;color:#1c1c24;">Duration</div>
<div class="a" style="left:458px;top:199px;width:85px;height:24px;background:#EEEEEE;border:1px solid #8A8A8A;box-shadow:inset 1px 1px 0 #fff,inset -1px -1px 0 #fff;"></div>
<div class="a t " style="left:459px;top:204px;line-height:16px;font-size:12px;color:#1c1c24;">5d</div>
<div class="a t " style="left:588px;top:130px;line-height:16px;font-size:12px;color:#1c1c24;">Conv. Date</div>
<div class="a" style="left:655px;top:126px;width:89px;height:24px;background:#EEEEEE;border:1px solid #8A8A8A;box-shadow:inset 1px 1px 0 #fff,inset -1px -1px 0 #fff;"></div>
<div class="a" style="left:589px;top:160px;width:12px;height:12px;background:linear-gradient(135deg,#fff 10%,#EE9E66 95%);border:1px solid #5F6F82;border-right-color:#8E9EB0;border-bottom-color:#8E9EB0;box-shadow:inset 1px 1px 0 #fff"></div>
<svg style="left:589px;top:160px" width="12" height="12"><path d="M1.6 6.4L3.6 5.6L4.6 7.6L9.4 2.4L10.2 3.2L5 9.8L4 9.8Z" fill="#111"/></svg>
<div class="a t " style="left:606px;top:159px;line-height:16px;font-size:12px;color:#1c1c24;">Show Suggestions</div>
<div class="a" style="left:589px;top:180px;width:13px;height:13px;background:linear-gradient(135deg,#fff 15%,#F0A870 95%);border:1px solid #B9CDE5"></div>
<div class="a t " style="left:606px;top:179px;line-height:16px;font-size:12px;color:#9A9A9A;">Event Pricing</div>
<div class="a" style="left:589px;top:200px;width:12px;height:12px;background:linear-gradient(135deg,#fff 10%,#EE9E66 95%);border:1px solid #5F6F82;border-right-color:#8E9EB0;border-bottom-color:#8E9EB0;box-shadow:inset 1px 1px 0 #fff"></div>
<svg style="left:589px;top:200px" width="12" height="12"><path d="M1.6 6.4L3.6 5.6L4.6 7.6L9.4 2.4L10.2 3.2L5 9.8L4 9.8Z" fill="#111"/></svg>
<div class="a t " style="left:606px;top:199px;line-height:16px;font-size:12px;color:#1c1c24;">Day-Week-Month Pricing</div>
<svg style="left:0px;top:126px" width="1188" height="23"><path d="M844.5 23V6.5L850.5 0.5H964.5V23" fill="#FE9A4A" stroke="#6E849C" stroke-width="1"/><path d="M845.5 23V6.9L850.9 1.5H963.5" fill="none" stroke="#fff" stroke-width="1"/><path d="M754.5 23V6.5L760.5 0.5H844.5V23" fill="#C64E2E" stroke="#5A7EC6" stroke-width="1"/><path d="M755.5 23V6.9L760.9 1.5H843.5" fill="none" stroke="#fff" stroke-width="1"/></svg>
<div class="a t " style="left:760px;top:130px;line-height:16px;font-size:12px;font-weight:bold;color:#fff;">Comments</div>
<div class="a t " style="left:850px;top:130px;line-height:16px;font-size:12px;color:#111;">LaborComments</div>
<div class="a" style="left:752px;top:148px;width:290px;height:83px;background:#C6DCF2"></div>
<div class="a" style="left:752px;top:148px;width:290px;height:1px;background:#5C80C6"></div>
<div class="a" style="left:752px;top:148px;width:1px;height:83px;background:#5C80C6"></div>
<div class="a" style="left:1041px;top:148px;width:1px;height:83px;background:#7E8CA0"></div>
<div class="a" style="left:752px;top:230px;width:290px;height:1px;background:#7E8CA0"></div>
<div class="a" style="left:753px;top:149px;width:288px;height:1px;background:#fff"></div>
<div class="a" style="left:1038px;top:149px;width:1px;height:81px;background:#fff"></div>
<div class="a" style="left:755px;top:148px;width:89px;height:2px;background:#C6DCF2"></div>
<div class="a" style="left:754px;top:152px;width:284px;height:75px;background:#fff;border:1px solid #AAAAAA"></div>
<div class="a" style="left:761px;top:154px;width:270px;height:69px;background:#EEEEEE;border:2px solid #727A84"></div>
<svg style="left:1009px;top:156px" width="18" height="18"><path d="M10.6 10.6L16 16" stroke="#5C5C78" stroke-width="3.4" stroke-linecap="round"/><path d="M11.4 11L16.2 15.8" stroke="#F2A23C" stroke-width="1.9" stroke-linecap="round"/><circle cx="6.6" cy="6.3" r="4.9" fill="#CFEFFC" stroke="#707A9C" stroke-width="1.1"/><circle cx="5.4" cy="7.6" r="2" fill="#fff" opacity=".85"/></svg>
<div class="a t " style="left:362px;top:241px;line-height:16px;font-size:12px;color:#1c1c24;">Customer</div>
<div class="a" style="left:421px;top:236px;width:160px;height:24px;background:#EEEEEE;border:1px solid #8A8A8A;box-shadow:inset 1px 1px 0 #fff,inset -1px -1px 0 #fff;"></div>
<div class="a t " style="left:422px;top:241px;line-height:16px;font-size:12px;color:#1c1c24;">LG ELECTRONICS</div>
<svg style="left:561px;top:237px" width="18" height="18"><path d="M10.6 10.6L16 16" stroke="#5C5C78" stroke-width="3.4" stroke-linecap="round"/><path d="M11.4 11L16.2 15.8" stroke="#F2A23C" stroke-width="1.9" stroke-linecap="round"/><circle cx="6.6" cy="6.3" r="4.9" fill="#CFEFFC" stroke="#707A9C" stroke-width="1.1"/><circle cx="5.4" cy="7.6" r="2" fill="#fff" opacity=".85"/></svg>
<div class="a t " style="left:362px;top:269px;line-height:16px;font-size:12px;color:#1c1c24;">Contact</div>
<div class="a" style="left:421px;top:265px;width:160px;height:24px;background:#EEEEEE;border:1px solid #8A8A8A;box-shadow:inset 1px 1px 0 #fff,inset -1px -1px 0 #fff;"></div>
<div class="a t " style="left:422px;top:270px;line-height:16px;font-size:12px;color:#1c1c24;">TOM HIDDLESTON</div>
<svg style="left:561px;top:266px" width="18" height="18"><path d="M10.6 10.6L16 16" stroke="#5C5C78" stroke-width="3.4" stroke-linecap="round"/><path d="M11.4 11L16.2 15.8" stroke="#F2A23C" stroke-width="1.9" stroke-linecap="round"/><circle cx="6.6" cy="6.3" r="4.9" fill="#CFEFFC" stroke="#707A9C" stroke-width="1.1"/><circle cx="5.4" cy="7.6" r="2" fill="#fff" opacity=".85"/></svg>
<div class="a t " style="left:362px;top:298px;line-height:16px;font-size:12px;color:#1c1c24;">Contact Tel #</div>
<div class="a" style="left:451px;top:294px;width:129px;height:24px;background:#EEEEEE;border:1px solid #8A8A8A;box-shadow:inset 1px 1px 0 #fff,inset -1px -1px 0 #fff;"></div>
<div class="a t " style="left:452px;top:299px;line-height:16px;font-size:12px;color:#1c1c24;">+44-17-5349-1585</div>
<div class="a t " style="left:587px;top:240px;line-height:16px;font-size:12px;color:#1c1c24;">Bill To</div>
<div class="a" style="left:654px;top:236px;width:160px;height:24px;background:#EEEEEE;border:1px solid #8A8A8A;box-shadow:inset 1px 1px 0 #fff,inset -1px -1px 0 #fff;"></div>
<div class="a t " style="left:655px;top:241px;line-height:16px;font-size:12px;color:#1c1c24;">LG ELECTRONICS</div>
<svg style="left:794px;top:237px" width="18" height="18"><path d="M10.6 10.6L16 16" stroke="#5C5C78" stroke-width="3.4" stroke-linecap="round"/><path d="M11.4 11L16.2 15.8" stroke="#F2A23C" stroke-width="1.9" stroke-linecap="round"/><circle cx="6.6" cy="6.3" r="4.9" fill="#CFEFFC" stroke="#707A9C" stroke-width="1.1"/><circle cx="5.4" cy="7.6" r="2" fill="#fff" opacity=".85"/></svg>
<div class="a t " style="left:587px;top:269px;line-height:16px;font-size:12px;color:#1c1c24;">Bill Contact</div>
<div class="a" style="left:654px;top:265px;width:160px;height:24px;background:#EEEEEE;border:1px solid #8A8A8A;box-shadow:inset 1px 1px 0 #fff,inset -1px -1px 0 #fff;"></div>
<div class="a t " style="left:655px;top:270px;line-height:16px;font-size:12px;color:#1c1c24;">TOM HIDDLESTON</div>
<svg style="left:794px;top:266px" width="18" height="18"><path d="M10.6 10.6L16 16" stroke="#5C5C78" stroke-width="3.4" stroke-linecap="round"/><path d="M11.4 11L16.2 15.8" stroke="#F2A23C" stroke-width="1.9" stroke-linecap="round"/><circle cx="6.6" cy="6.3" r="4.9" fill="#CFEFFC" stroke="#707A9C" stroke-width="1.1"/><circle cx="5.4" cy="7.6" r="2" fill="#fff" opacity=".85"/></svg>
<div class="a t " style="left:587px;top:298px;line-height:16px;font-size:12px;color:#1c1c24;">Language</div>
<div class="a" style="left:654px;top:294px;width:90px;height:24px;background:#EEEEEE;border:1px solid #8A8A8A;box-shadow:inset 1px 1px 0 #fff,inset -1px -1px 0 #fff;"></div>
<svg style="left:724px;top:295px" width="18" height="18"><path d="M10.6 10.6L16 16" stroke="#5C5C78" stroke-width="3.4" stroke-linecap="round"/><path d="M11.4 11L16.2 15.8" stroke="#F2A23C" stroke-width="1.9" stroke-linecap="round"/><circle cx="6.6" cy="6.3" r="4.9" fill="#CFEFFC" stroke="#707A9C" stroke-width="1.1"/><circle cx="5.4" cy="7.6" r="2" fill="#fff" opacity=".85"/></svg>
<div class="a t " style="left:826px;top:247px;line-height:16px;font-size:12px;color:#1c1c24;">Document Folder:</div>
<div class="a" style="left:826px;top:264px;width:216px;height:49px;background:#EEEEEE;border:2px solid #767E88"></div>
<div class="a" style="left:1014px;top:240px;width:49px;height:23px;border:1px solid #B4B4B4;background:#fff"></div>
<div class="a" style="left:1024px;top:242px;width:30px;height:20px;border:1px solid #776E6E;border-radius:2px;background:#fff"></div>
<div class="a t" style="left:1026px;top:245px;font:bold 11px/14px 'Liberation Sans',sans-serif;color:#000;transform:scaleX(0.86);transform-origin:0 0">Reset</div>
<svg style="left:0px;top:334px" width="1188" height="23"><path d="M77.5 23V6.5L83.5 0.5H134.5V23" fill="#FE9A4A" stroke="#6E849C" stroke-width="1"/><path d="M78.5 23V6.9L83.9 1.5H133.5" fill="none" stroke="#fff" stroke-width="1"/><path d="M10.5 23V6.5L16.5 0.5H77.5V23" fill="#C64E2E" stroke="#5A7EC6" stroke-width="1"/><path d="M11.5 23V6.9L16.9 1.5H76.5" fill="none" stroke="#fff" stroke-width="1"/></svg>
<div class="a t " style="left:15px;top:338px;line-height:16px;font-size:12px;font-weight:bold;color:#fff;">Item(s)</div>
<div class="a t " style="left:82px;top:338px;line-height:16px;font-size:12px;color:#111;">Labor</div>
<div class="a" style="left:8px;top:356px;width:1172px;height:299px;background:#C6DCF2"></div>
<div class="a" style="left:8px;top:356px;width:1172px;height:1px;background:#5C80C6"></div>
<div class="a" style="left:8px;top:356px;width:1px;height:299px;background:#5C80C6"></div>
<div class="a" style="left:1179px;top:356px;width:1px;height:299px;background:#7E8CA0"></div>
<div class="a" style="left:8px;top:654px;width:1172px;height:1px;background:#7E8CA0"></div>
<div class="a" style="left:9px;top:357px;width:1170px;height:1px;background:#fff"></div>
<div class="a" style="left:1176px;top:357px;width:1px;height:297px;background:#fff"></div>
<div class="a" style="left:11px;top:356px;width:66px;height:2px;background:#C6DCF2"></div>
<div class="a" style="left:10px;top:360px;width:1166px;height:291px;background:#fff;border:1px solid #AAAAAA"></div>
<div class="a t " style="left:45px;top:368px;line-height:16px;font-size:12px;color:#1c1c24;">Search :</div>
<div class="a t " style="left:120px;top:368px;line-height:16px;font-size:12px;color:#1c1c24;">Asset</div>
<div class="a" style="left:162px;top:365px;width:120px;height:24px;background:#fff;border:1px solid #111;"></div>
<div class="a t " style="left:362px;top:368px;line-height:16px;font-size:12px;color:#1c1c24;">Product</div>
<div class="a" style="left:412px;top:365px;width:195px;height:24px;background:#fff;border:1px solid #111;"></div>
<div class="a t " style="left:625px;top:368px;line-height:16px;font-size:12px;color:#1c1c24;">Qty</div>
<div class="a" style="left:647px;top:365px;width:40px;height:24px;background:#fff;border:1px solid #111;"></div>
<div class="a t " style="left:649px;top:370px;line-height:16px;font-size:12px;color:#1c1c24;">1</div>
<div class="a" style="left:707px;top:371px;width:12px;height:12px;background:linear-gradient(135deg,#fff 10%,#EE9E66 95%);border:1px solid #5F6F82;border-right-color:#8E9EB0;border-bottom-color:#8E9EB0;box-shadow:inset 1px 1px 0 #fff"></div>
<div class="a t " style="left:724px;top:370px;line-height:16px;font-size:12px;color:#1c1c24;">Update existing lines</div>
<div class="a" style="left:10px;top:393px;width:1166px;height:1px;background:#AAAAAA"></div>
<div class="a" style="left:10px;top:395px;width:1166px;height:1px;background:#AAAAAA"></div>
<div class="a" style="left:12px;top:397px;width:1162px;height:252px;background:#fff;border:1px solid #7A8CA0"></div>
<div class="a" style="left:13px;top:398px;width:1160px;height:39px;overflow:hidden;background:#F47A45">
<div class="a" style="left:0px;top:0px;width:15px;height:19px;background:#C64E2E;border:1px solid #8A3218;box-shadow:inset 1px 1px 0 #F06A3A"></div>
<div class="a" style="left:-1px;top:19px;width:17px;height:20px;background:#FE9A4A;border-left:1px solid #C8803A;border-bottom:1px solid #D08038"></div>
<div class="a" style="left:16px;top:0px;width:14px;height:19px;background:#C64E2E;border:1px solid #8A3218;box-shadow:inset 1px 1px 0 #F06A3A"></div>
<div class="a" style="left:15px;top:19px;width:16px;height:20px;background:#FE9A4A;border-left:1px solid #C8803A;border-bottom:1px solid #D08038"></div>
<div class="a" style="left:31px;top:0px;width:14px;height:19px;background:#C64E2E;border:1px solid #8A3218;box-shadow:inset 1px 1px 0 #F06A3A"></div>
<div class="a" style="left:30px;top:19px;width:16px;height:20px;background:#FE9A4A;border-left:1px solid #C8803A;border-bottom:1px solid #D08038"></div>
<div class="a" style="left:46px;top:0px;width:14px;height:19px;background:#C64E2E;border:1px solid #8A3218;box-shadow:inset 1px 1px 0 #F06A3A"></div>
<div class="a" style="left:45px;top:19px;width:16px;height:20px;background:#FE9A4A;border-left:1px solid #C8803A;border-bottom:1px solid #D08038"></div>
<div class="a" style="left:61px;top:0px;width:14px;height:19px;background:#C64E2E;border:1px solid #8A3218;box-shadow:inset 1px 1px 0 #F06A3A"></div>
<div class="a" style="left:60px;top:19px;width:16px;height:20px;background:#FE9A4A;border-left:1px solid #C8803A;border-bottom:1px solid #D08038"></div>
<div class="a" style="left:76px;top:0px;width:19px;height:19px;background:#C64E2E;border:1px solid #8A3218;box-shadow:inset 1px 1px 0 #F06A3A"></div>
<div class="a" style="left:75px;top:19px;width:21px;height:20px;background:#FE9A4A;border-left:1px solid #C8803A;border-bottom:1px solid #D08038"></div>
<div class="a" style="left:96px;top:0px;width:19px;height:19px;background:#C64E2E;border:1px solid #8A3218;box-shadow:inset 1px 1px 0 #F06A3A"></div>
<div class="a" style="left:95px;top:19px;width:21px;height:20px;background:#FE9A4A;border-left:1px solid #C8803A;border-bottom:1px solid #D08038"></div>
<div class="a" style="left:116px;top:0px;width:18px;height:19px;background:#C64E2E;border:1px solid #8A3218;box-shadow:inset 1px 1px 0 #F06A3A"></div>
<div class="a" style="left:115px;top:19px;width:20px;height:20px;background:#FE9A4A;border-left:1px solid #C8803A;border-bottom:1px solid #D08038"></div>
<div class="a" style="left:135px;top:0px;width:74px;height:19px;background:#C64E2E;border:1px solid #8A3218;box-shadow:inset 1px 1px 0 #F06A3A"></div>
<div class="a" style="left:134px;top:19px;width:76px;height:20px;background:#FE9A4A;border-left:1px solid #C8803A;border-bottom:1px solid #D08038"></div>
<div class="a" style="left:210px;top:0px;width:19px;height:19px;background:#C64E2E;border:1px solid #8A3218;box-shadow:inset 1px 1px 0 #F06A3A"></div>
<div class="a" style="left:209px;top:19px;width:21px;height:20px;background:#FE9A4A;border-left:1px solid #C8803A;border-bottom:1px solid #D08038"></div>
<div class="a" style="left:230px;top:0px;width:44px;height:19px;background:#C64E2E;border:1px solid #8A3218;box-shadow:inset 1px 1px 0 #F06A3A"></div>
<div class="a" style="left:229px;top:19px;width:46px;height:20px;background:#FE9A4A;border-left:1px solid #C8803A;border-bottom:1px solid #D08038"></div>
<div class="a" style="left:275px;top:0px;width:99px;height:19px;background:#C64E2E;border:1px solid #8A3218;box-shadow:inset 1px 1px 0 #F06A3A"></div>
<div class="a" style="left:274px;top:19px;width:101px;height:20px;background:#FE9A4A;border-left:1px solid #C8803A;border-bottom:1px solid #D08038"></div>
<div class="a" style="left:375px;top:0px;width:142px;height:19px;background:#C64E2E;border:1px solid #8A3218;box-shadow:inset 1px 1px 0 #F06A3A"></div>
<div class="a" style="left:374px;top:19px;width:144px;height:20px;background:#FE9A4A;border-left:1px solid #C8803A;border-bottom:1px solid #D08038"></div>
<div class="a" style="left:518px;top:0px;width:54px;height:19px;background:#C64E2E;border:1px solid #8A3218;box-shadow:inset 1px 1px 0 #F06A3A"></div>
<div class="a" style="left:517px;top:19px;width:56px;height:20px;background:#FE9A4A;border-left:1px solid #C8803A;border-bottom:1px solid #D08038"></div>
<div class="a" style="left:573px;top:0px;width:29px;height:19px;background:#C64E2E;border:1px solid #8A3218;box-shadow:inset 1px 1px 0 #F06A3A"></div>
<div class="a" style="left:572px;top:19px;width:31px;height:20px;background:#FE9A4A;border-left:1px solid #C8803A;border-bottom:1px solid #D08038"></div>
<div class="a" style="left:603px;top:0px;width:39px;height:19px;background:#C64E2E;border:1px solid #8A3218;box-shadow:inset 1px 1px 0 #F06A3A"></div>
<div class="a" style="left:602px;top:19px;width:41px;height:20px;background:#FE9A4A;border-left:1px solid #C8803A;border-bottom:1px solid #D08038"></div>
<div class="a" style="left:643px;top:0px;width:99px;height:19px;background:#C64E2E;border:1px solid #8A3218;box-shadow:inset 1px 1px 0 #F06A3A"></div>
<div class="a" style="left:642px;top:19px;width:101px;height:20px;background:#FE9A4A;border-left:1px solid #C8803A;border-bottom:1px solid #D08038"></div>
<div class="a" style="left:743px;top:0px;width:99px;height:19px;background:#C64E2E;border:1px solid #8A3218;box-shadow:inset 1px 1px 0 #F06A3A"></div>
<div class="a" style="left:742px;top:19px;width:101px;height:20px;background:#FE9A4A;border-left:1px solid #C8803A;border-bottom:1px solid #D08038"></div>
<div class="a" style="left:843px;top:0px;width:89px;height:19px;background:#C64E2E;border:1px solid #8A3218;box-shadow:inset 1px 1px 0 #F06A3A"></div>
<div class="a" style="left:842px;top:19px;width:91px;height:20px;background:#FE9A4A;border-left:1px solid #C8803A;border-bottom:1px solid #D08038"></div>
<div class="a" style="left:933px;top:0px;width:69px;height:19px;background:#C64E2E;border:1px solid #8A3218;box-shadow:inset 1px 1px 0 #F06A3A"></div>
<div class="a" style="left:932px;top:19px;width:71px;height:20px;background:#FE9A4A;border-left:1px solid #C8803A;border-bottom:1px solid #D08038"></div>
<div class="a" style="left:1003px;top:0px;width:70px;height:19px;background:#C64E2E;border:1px solid #8A3218;box-shadow:inset 1px 1px 0 #F06A3A"></div>
<div class="a" style="left:1002px;top:19px;width:72px;height:20px;background:#FE9A4A;border-left:1px solid #C8803A;border-bottom:1px solid #D08038"></div>
<div class="a" style="left:1074px;top:0px;width:58px;height:19px;background:#C64E2E;border:1px solid #8A3218;box-shadow:inset 1px 1px 0 #F06A3A"></div>
<div class="a" style="left:1073px;top:19px;width:60px;height:20px;background:#FE9A4A;border-left:1px solid #C8803A;border-bottom:1px solid #D08038"></div>
<div class="a" style="left:1133px;top:0px;width:94px;height:19px;background:#C64E2E;border:1px solid #8A3218;box-shadow:inset 1px 1px 0 #F06A3A"></div>
<div class="a" style="left:1132px;top:19px;width:96px;height:20px;background:#FE9A4A;border-left:1px solid #C8803A;border-bottom:1px solid #D08038"></div>
</div>
<div class="a t" style="left:13px;top:401px;width:15px;text-align:center;line-height:16px;font-size:12px;color:#fff;">T</div>
<div class="a t" style="left:29px;top:401px;width:14px;text-align:center;line-height:16px;font-size:12px;color:#fff;">C</div>
<div class="a t" style="left:44px;top:401px;width:14px;text-align:center;line-height:16px;font-size:12px;color:#fff;">X</div>
<div class="a t" style="left:59px;top:401px;width:14px;text-align:center;line-height:16px;font-size:12px;color:#fff;">M</div>
<div class="a t" style="left:74px;top:401px;width:14px;text-align:center;line-height:16px;font-size:12px;color:#fff;">S</div>
<div class="a t" style="left:89px;top:401px;width:19px;text-align:center;line-height:16px;font-size:12px;color:#fff;">I.C</div>
<div class="a t" style="left:109px;top:401px;width:19px;text-align:center;line-height:16px;font-size:12px;color:#fff;">I....</div>
<div class="a t" style="left:129px;top:401px;width:18px;text-align:center;line-height:16px;font-size:12px;color:#fff;">I.I</div>
<div class="a t" style="left:148px;top:401px;width:74px;text-align:center;line-height:16px;font-size:12px;color:#fff;">Status</div>
<div class="a t" style="left:223px;top:401px;width:19px;text-align:center;line-height:16px;font-size:12px;color:#fff;">L</div>
<div class="a t" style="left:243px;top:401px;width:44px;text-align:center;line-height:16px;font-size:12px;color:#fff;">Action</div>
<div class="a t" style="left:288px;top:401px;width:99px;text-align:center;line-height:16px;font-size:12px;color:#fff;">Product ID</div>
<div class="a t" style="left:388px;top:401px;width:142px;text-align:center;line-height:16px;font-size:12px;color:#fff;">Description</div>
<div class="a t" style="left:531px;top:401px;width:54px;text-align:center;line-height:16px;font-size:12px;color:#fff;">Duration</div>
<div class="a t" style="left:586px;top:401px;width:29px;text-align:center;line-height:16px;font-size:12px;color:#fff;">Qty</div>
<div class="a t" style="left:616px;top:401px;width:39px;text-align:center;line-height:16px;font-size:12px;color:#fff;">Unit</div>
<div class="a t" style="left:656px;top:401px;width:99px;text-align:center;line-height:16px;font-size:12px;color:#fff;">Shipping Site</div>
<div class="a t" style="left:756px;top:401px;width:99px;text-align:center;line-height:16px;font-size:12px;color:#fff;">Returning Site</div>
<div class="a t" style="left:856px;top:401px;width:89px;text-align:center;line-height:16px;font-size:12px;color:#fff;">Day/Each Price</div>
<div class="a t" style="left:946px;top:401px;width:69px;text-align:center;line-height:16px;font-size:12px;color:#fff;">Week Price</div>
<div class="a t" style="left:1016px;top:401px;width:70px;text-align:center;line-height:16px;font-size:12px;color:#fff;">Month Price</div>
<div class="a t" style="left:1087px;top:401px;width:58px;text-align:center;line-height:16px;font-size:12px;color:#fff;">Net Each</div>
<div class="a t " style="left:1154px;top:401px;line-height:16px;font-size:12px;color:#fff;">Tot</div>
<div class="a" style="left:14px;top:421px;width:13px;height:13px;border:1px solid #fff;border-left-color:#6E8298;border-top-color:#6E8298;box-shadow:inset 1px 1px 0 #fff,inset -1px -1px 0 #6E8298;background:linear-gradient(135deg,#FDE6D2 5%,#F29A5C 85%)"></div>
<svg style="left:14px;top:421px" width="13" height="13"><path d="M3 5.2H5.2V8L9.6 3.2L10.4 4.2L5.2 10.4H3Z" fill="#1A1A1A"/></svg>
<div class="a" style="left:30px;top:421px;width:13px;height:13px;border:1px solid #fff;border-left-color:#6E8298;border-top-color:#6E8298;box-shadow:inset 1px 1px 0 #fff,inset -1px -1px 0 #6E8298;background:linear-gradient(135deg,#FDE6D2 5%,#F29A5C 85%)"></div>
<svg style="left:30px;top:421px" width="13" height="13"><path d="M3 5.2H5.2V8L9.6 3.2L10.4 4.2L5.2 10.4H3Z" fill="#1A1A1A"/></svg>
<div class="a" style="left:45px;top:421px;width:13px;height:13px;border:1px solid #fff;border-left-color:#6E8298;border-top-color:#6E8298;box-shadow:inset 1px 1px 0 #fff,inset -1px -1px 0 #6E8298;background:linear-gradient(135deg,#FDE6D2 5%,#F29A5C 85%)"></div>
<div class="a" style="left:60px;top:421px;width:13px;height:13px;border:1px solid #fff;border-left-color:#6E8298;border-top-color:#6E8298;box-shadow:inset 1px 1px 0 #fff,inset -1px -1px 0 #6E8298;background:linear-gradient(135deg,#FDE6D2 5%,#F29A5C 85%)"></div>
<div class="a" style="left:75px;top:421px;width:13px;height:13px;border:1px solid #fff;border-left-color:#6E8298;border-top-color:#6E8298;box-shadow:inset 1px 1px 0 #fff,inset -1px -1px 0 #6E8298;background:linear-gradient(135deg,#FDE6D2 5%,#F29A5C 85%)"></div>
<div class="a" style="left:92px;top:421px;width:13px;height:13px;border:1px solid #fff;border-left-color:#6E8298;border-top-color:#6E8298;box-shadow:inset 1px 1px 0 #fff,inset -1px -1px 0 #6E8298;background:linear-gradient(135deg,#FDE6D2 5%,#F29A5C 85%)"></div>
<div class="a" style="left:112px;top:421px;width:13px;height:13px;border:1px solid #fff;border-left-color:#6E8298;border-top-color:#6E8298;box-shadow:inset 1px 1px 0 #fff,inset -1px -1px 0 #6E8298;background:linear-gradient(135deg,#FDE6D2 5%,#F29A5C 85%)"></div>
<div class="a" style="left:132px;top:421px;width:13px;height:13px;border:1px solid #fff;border-left-color:#6E8298;border-top-color:#6E8298;box-shadow:inset 1px 1px 0 #fff,inset -1px -1px 0 #6E8298;background:linear-gradient(135deg,#FDE6D2 5%,#F29A5C 85%)"></div>
<div class="a" style="left:226px;top:421px;width:13px;height:13px;border:1px solid #fff;border-left-color:#6E8298;border-top-color:#6E8298;box-shadow:inset 1px 1px 0 #fff,inset -1px -1px 0 #6E8298;background:linear-gradient(135deg,#FDE6D2 5%,#F29A5C 85%)"></div>
<div class="a t " style="left:149px;top:420px;line-height:16px;font-size:12px;color:#1c1c24;">Pool</div>
<div class="a t " style="left:245px;top:420px;line-height:16px;font-size:12px;color:#1c1c24;">Rent</div>
<div class="a t " style="left:289px;top:420px;line-height:16px;font-size:12px;color:#1c1c24;">LG LED</div>
<div class="a t " style="left:395px;top:420px;line-height:16px;font-size:12px;color:#1c1c24;">LG LED</div>
<div class="a t " style="left:532px;top:420px;line-height:16px;font-size:12px;color:#1c1c24;">5d</div>
<div class="a t" style="right:574px;top:420px;text-align:right;line-height:16px;font-size:12px;color:#1c1c24;">5</div>
<div class="a t " style="left:618px;top:420px;line-height:16px;font-size:12px;color:#1c1c24;">Day</div>
<div class="a t " style="left:657px;top:420px;line-height:16px;font-size:12px;color:#1c1c24;">ML EUROPE</div>
<div class="a t " style="left:757px;top:420px;line-height:16px;font-size:12px;color:#1c1c24;">ML EUROPE</div>
<div class="a t" style="right:244px;top:420px;text-align:right;line-height:16px;font-size:12px;color:#1c1c24;">0.00</div>
<div class="a t" style="right:174px;top:420px;text-align:right;line-height:16px;font-size:12px;color:#1c1c24;">0.00</div>
<div class="a t" style="right:103px;top:420px;text-align:right;line-height:16px;font-size:12px;color:#1c1c24;">0.00</div>
<div class="a t" style="right:44px;top:420px;text-align:right;line-height:16px;font-size:12px;color:#1c1c24;">0.00</div>
<div class="a" style="left:146px;top:417px;width:77px;height:20px;border:2px solid #C00000"></div>
<div class="a" style="left:584px;top:417px;width:271px;height:20px;border:2px solid #C00000"></div>
<div class="a" style="left:13px;top:631px;width:1160px;height:16px;background:#EEEEEE;border-top:1px solid #7C8CA0;border-bottom:1px solid #7C8CA0;box-shadow:inset 0 1px 0 #C8DCF0"></div>
<div class="a" style="left:13px;top:647px;width:1160px;height:1px;background:#C8DCF0"></div>
<div class="a" style="left:13px;top:632px;width:15px;height:14px;background:#EEEEEE;box-shadow:inset 1px 1px 0 #fff;border-right:1px solid #D0D8E0"></div>
<svg style="left:19px;top:636px" width="5" height="8"><path d="M4.5 0V8L0 4Z" fill="#222"/></svg>
<div class="a" style="left:28px;top:631px;width:569px;height:16px;background:linear-gradient(175deg,#F3C8A2,#EAAB7E 50%,#E69C66);border:1px solid #F8BE00;box-shadow:inset 1px 1px 0 #E08A4C,inset -1px -1px 0 #E8A070"></div>
<svg style="left:310px;top:634px" width="6" height="9"><path d="M0.5 0V9M2.5 0V9M4.5 0V9" stroke="#A07A62" stroke-width="1"/></svg>
<div class="a" style="left:1157px;top:632px;width:15px;height:14px;background:#EEEEEE;box-shadow:inset 1px 1px 0 #fff;border-left:1px solid #7C8CA0"></div>
<svg style="left:1162px;top:636px" width="5" height="8"><path d="M0 0V8L4.5 4Z" fill="#222"/></svg>
<div class="a t " style="left:70px;top:661px;line-height:18px;font-size:14px;font-weight:bold;color:#1c1c24;">Items</div>
<div class="a" style="left:120px;top:657px;width:100px;height:24px;background:#EEEEEE;border:1px solid #8A8A8A;box-shadow:inset 1px 1px 0 #fff,inset -1px -1px 0 #fff;"></div>
<div class="a t " style="left:235px;top:661px;line-height:18px;font-size:14px;font-weight:bold;color:#1c1c24;">Labor</div>
<div class="a" style="left:287px;top:657px;width:100px;height:24px;background:#EEEEEE;border:1px solid #8A8A8A;box-shadow:inset 1px 1px 0 #fff,inset -1px -1px 0 #fff;"></div>
<div class="a t " style="left:446px;top:661px;line-height:18px;font-size:14px;font-weight:bold;color:#1c1c24;">Sub Total</div>
<div class="a" style="left:525px;top:657px;width:100px;height:24px;background:#EEEEEE;border:1px solid #8A8A8A;box-shadow:inset 1px 1px 0 #fff,inset -1px -1px 0 #fff;"></div>
<div class="a t " style="left:636px;top:661px;line-height:18px;font-size:14px;font-weight:bold;color:#1c1c24;">Tax</div>
<div class="a" style="left:670px;top:657px;width:100px;height:24px;background:#EEEEEE;border:1px solid #8A8A8A;box-shadow:inset 1px 1px 0 #fff,inset -1px -1px 0 #fff;"></div>
<div class="a" style="left:813px;top:657px;width:89px;height:23px;border:1px solid #B8B8B8;background:#fff"></div>
<div class="a t" style="left:813px;top:661px;width:89px;text-align:center;line-height:18px;font-size:14px;font-weight:bold;color:#1c1c24;">Total</div>
<div class="a" style="left:906px;top:657px;width:100px;height:24px;background:#EEEEEE;border:1px solid #8A8A8A;box-shadow:inset 1px 1px 0 #fff,inset -1px -1px 0 #fff;"></div>
<div class="a t " style="left:907px;top:660px;line-height:18px;font-size:14px;font-weight:bold;color:#1c1c24;">0.00</div>
<div class="a" style="left:8px;top:691px;width:1172px;height:25px;border:2px solid #8A8A8A;border-top-color:#9A9A9A;border-right:1px solid #C8C8C8;border-bottom:1px solid #C8C8C8;background:#fff"></div>
</body></html>
